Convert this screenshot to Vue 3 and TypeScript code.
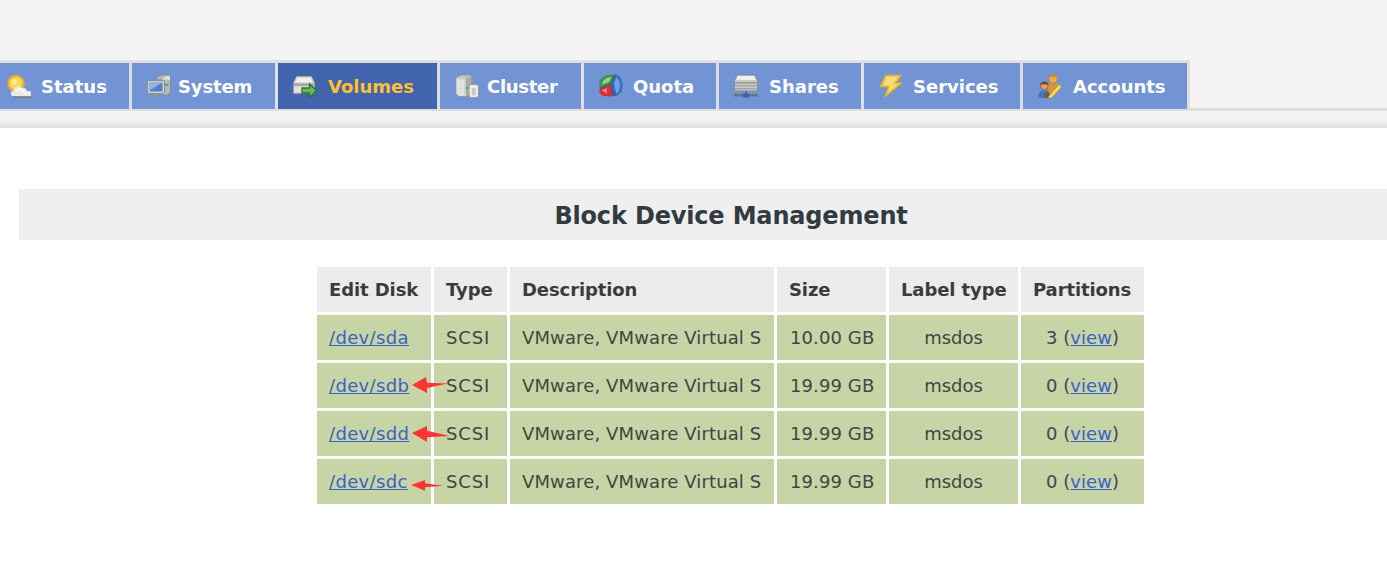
<script setup lang="ts">
interface Tab { name: string; icon: string; active?: boolean }
const tabs: Tab[] = [
  { name: 'Status', icon: 'status' },
  { name: 'System', icon: 'system' },
  { name: 'Volumes', icon: 'volumes', active: true },
  { name: 'Cluster', icon: 'cluster' },
  { name: 'Quota', icon: 'quota' },
  { name: 'Shares', icon: 'shares' },
  { name: 'Services', icon: 'services' },
  { name: 'Accounts', icon: 'accounts' },
]
const rows = [
  { dev: '/dev/sda', size: '10.00 GB', parts: 3 },
  { dev: '/dev/sdb', size: '19.99 GB', parts: 0 },
  { dev: '/dev/sdd', size: '19.99 GB', parts: 0 },
  { dev: '/dev/sdc', size: '19.99 GB', parts: 0 },
]
const arrows: Record<string, string> = {
  '/dev/sdb': '1,9 15,1 16,6.700 37,7.500 16,12 16,17',
  '/dev/sdd': '1,9 16,2 16,6.700 39,12 16,13.300 16,18',
  '/dev/sdc': '0,13 14,8 14,11.300 32,13.700 14,15.300 14,18.700',
}
</script>

<template>
  <div class="page">
    <nav class="topbar">
      <ul class="tabs">
        <li v-for="t in tabs" :key="t.name" class="tab" :class="['tab-' + t.icon, { active: t.active }]">
          <svg class="icon" viewBox="0 0 24 24" width="24" height="24">
            <template v-if="t.icon === 'status'">
              <circle cx="9" cy="9.500" r="8.300" fill="#efb637" stroke="#e8a52a" stroke-width="1.400" stroke-dasharray="1.600 1.200" />
              <circle cx="9" cy="9.500" r="6.300" fill="#f8d955" />
              <circle cx="7.500" cy="8" r="3" fill="#fbe88f" />
              <path d="M7 22.500a3 3 0 0 1 0-6 4.500 4.500 0 0 1 8-2.500 3.800 3.800 0 0 1 5 3.200 2.800 2.800 0 0 1 3 5.300z" fill="#e9ebe8" />
              <path d="M9 17.500a3 3 0 0 1 5-2l2 1.500 3 2" stroke="#fff" stroke-width="1.200" fill="none" />
              <path d="M6 23h18" stroke="#77776c" stroke-width="1.400" />
            </template>
            <template v-else-if="t.icon === 'system'">
              <path d="M10 3 14 1h9.500v17l-3 3H16V6h-6z" fill="#b4b8b8" stroke="#85888a" stroke-width="0.800" />
              <path d="M14.500 5.500 19.500 2h3.500v4z" fill="#dcdedd" />
              <rect x="18" y="10" width="3.500" height="1.600" fill="#4aa65a" />
              <rect x="0.500" y="6.500" width="17" height="13" rx="1" fill="#cfd1d0" stroke="#8b8e8f" />
              <rect x="2.500" y="8.500" width="13" height="9" fill="#4f83c0" />
              <path d="M2.500 8.500h13l-13 8z" fill="#8bb6e3" />
              <path d="M7 19.500h4v2h3v1.500H4v-1.500h3z" fill="#8f9394" />
            </template>
            <template v-else-if="t.icon === 'volumes'">
              <path d="M3.500 2.500h15l3 6v11H0.500V8.500z" fill="#c9c9c5" stroke="#a3a39f" stroke-width="0.800" />
              <path d="M4 3.500h14l2 5H2z" fill="#efefec" />
              <rect x="1" y="9.500" width="20" height="2.400" fill="#a6a6a2" />
              <rect x="1" y="12.500" width="20" height="6" fill="#e0e0dc" />
              <path d="M9 14h7.500V10l7 6.500-7 7V19H9z" fill="#73b55a" stroke="#24762b" stroke-width="1.300" />
            </template>
            <template v-else-if="t.icon === 'cluster'">
              <path d="M1 4 6 1h9l1.500 2v16L11 22.500H4L1 20z" fill="#c3c6c2" stroke="#94978f" stroke-width="0.800" />
              <path d="M1.500 4.500h9V22H4l-2.500-2z" fill="#e0e2de" />
              <path d="M4 4h6.500V22H9V6H4z" fill="#cfd2cd" />
              <path d="M11 3.500h5v15.500l-5 3z" fill="#a8aca6" />
              <circle cx="11.800" cy="14" r="1.100" fill="#4bab55" />
              <rect x="14" y="10.500" width="9.500" height="13" rx="2.200" fill="#e9ebe6" stroke="#989b95" />
              <rect x="17" y="14" width="3.600" height="7.500" rx="0.600" fill="#c7cac4" />
            </template>
            <template v-else-if="t.icon === 'quota'">
              <path d="M0.500 6 6 2 17 0.500l4.500 3L23.500 11l-1 6.500-5 4.500-13 0-3.500-3z" fill="#3d5f8f" />
              <path d="M0.500 14 1 6 6 2 15 0.500 12 9z" fill="#3a9a48" />
              <path d="M3 10.500 4 7 8 4l4.500-1L10 8z" fill="#9dd28f" />
              <path d="M17 0.500l4.500 3L23.500 11l-1 6.500-5 4.500-3.500-8-1-4z" fill="#3a6fc4" />
              <path d="M17.500 3.500l2.500 3 1 5-1 5-2.500 3-1.500-6-1-4z" fill="#6ea3e8" />
              <path d="M0.500 15.500 11.500 10.500 13 22.500 4 22 0.500 19z" fill="#df2b35" />
              <path d="M2.500 16.500 8 14v5.500z" fill="#f08588" />
            </template>
            <template v-else-if="t.icon === 'shares'">
              <path d="M3 1h18l2.500 5.500V17H0.500V6.500z" fill="#c6c8c6" stroke="#85888a" stroke-width="0.800" />
              <path d="M4 2h16l1.800 4H2.200z" fill="#f0f1ef" />
              <rect x="1" y="8" width="22" height="1.500" fill="#96999a" />
              <rect x="1" y="11" width="22" height="1.500" fill="#a2a6a6" />
              <rect x="1" y="14" width="22" height="1.500" fill="#a2a6a6" />
              <rect x="11" y="17" width="2" height="3" fill="#666" />
              <rect x="0" y="20" width="9" height="2.500" fill="#6e7374" />
              <rect x="15" y="20" width="9" height="2.500" fill="#6e7374" />
              <rect x="9" y="19.500" width="6" height="4" fill="#2b63cc" />
            </template>
            <template v-else-if="t.icon === 'services'">
              <path d="M6.500 1H23l-6 7.500h6.500L5 24l4-11H1z" fill="#efc545" stroke="#d2a02c" stroke-width="0.900" />
              <path d="M8 3h10.500l-5.500 7.500h5L9 18l2.500-7H4.500z" fill="#f7df7f" />
            </template>
            <template v-else>
              <circle cx="15" cy="5" r="4.200" fill="#eeaa55" stroke="#c27a2b" stroke-width="0.700" />
              <path d="M10.500 4C11 -0.500 19.500 -0.500 20 4c-2-1.500-7.500-1.500-9.500 0z" fill="#d68c1e" />
              <path d="M10.500 9.500h9l4 4-7 8-7-3z" fill="#dc9436" />
              <circle cx="6.300" cy="12" r="3.800" fill="#dca06a" stroke="#7f4f27" stroke-width="0.700" />
              <path d="M2 11c.5-4.500 8.500-4.500 8.500 0-2-1-6.500-1-8.500 0z" fill="#6e4524" />
              <path d="M0.500 24v-4L3.500 16.500h5.500L12 20v4z" fill="#3c78c0" />
              <path d="M6 20.500 10 17l3 7H7z" fill="#7c5a30" />
              <path d="M10 23 21 10.500l2.500 2.500L13 24.500z" fill="#f3dc6d" stroke="#b48c24" stroke-width="0.700" />
            </template>
          </svg>
          <span class="label">{{ t.name }}</span>
        </li>
      </ul>
    </nav>
    <div class="shade"></div>
    <main class="content">
      <h1 class="title">Block Device Management</h1>
      <table class="disks">
        <thead>
          <tr>
            <th class="c1">Edit Disk</th>
            <th class="c2">Type</th>
            <th class="c3">Description</th>
            <th class="c4">Size</th>
            <th class="c5">Label type</th>
            <th class="c6">Partitions</th>
          </tr>
        </thead>
        <tbody>
          <tr v-for="r in rows" :key="r.dev">
            <td class="dev">
              <a href="#">{{ r.dev }}</a>
              <svg v-if="arrows[r.dev]" class="arrow" viewBox="0 0 40 20" width="40" height="20">
                <polygon :points="arrows[r.dev]" fill="#fb3535" />
              </svg>
            </td>
            <td class="type">SCSI</td>
            <td class="desc">VMware, VMware Virtual S</td>
            <td class="size">{{ r.size }}</td>
            <td class="mid">msdos</td>
            <td class="mid parts">{{ r.parts }} (<a href="#">view</a>)</td>
          </tr>
        </tbody>
      </table>
    </main>
  </div>
</template>

<style scoped>
.page {
  width: 1387px;
  height: 586px;
  overflow: hidden;
  background: #fff;
  font-family: "DejaVu Sans", Verdana, sans-serif;
  color: #444;
}
.topbar {
  background: #f4f4f4;
  padding-top: 60px;
  height: 111px;
  box-sizing: border-box;
  position: relative;
}
.topbar::after {
  content: "";
  position: absolute;
  left: 0;
  right: 0;
  bottom: 0;
  height: 3px;
  background: #dedede;
}
.tabs {
  list-style: none;
  margin: 0;
  padding: 3px 3px 0 0;
  display: grid;
  grid-template-columns: 129px 143px 159px 141px 132px 142px 156px 164px;
  gap: 3px;
  width: 1190px;
  box-sizing: border-box;
  height: 51px;
  background: #dedede;
  position: relative;
  z-index: 1;
}
.tab {
  height: 46px;
  background: #7394d4;
  display: flex;
  align-items: center;
  padding-left: 15px;
  box-sizing: border-box;
  color: #fff;
  font-weight: 700;
  font-size: 18px;
}
.tab:first-child { padding-left: 7px; }
.tab.active { background: #4263ad; color: #fdc02f; }
.icon { flex: none; margin-right: 11px; }
.tab-status .icon { margin-right: 10px; }
.tab-system .icon { margin-right: 7px; }
.tab-system .label { letter-spacing: -0.15px; }
.tab-cluster .icon { margin-right: 8px; }
.tab-cluster .label { letter-spacing: -0.3px; }
.tab-quota .icon { margin-right: 10px; }
.tab-services .icon { margin-right: 10px; }
.shade {
  height: 17px;
  background: linear-gradient(#f4f4f4 0, #f4f4f4 50%, #e0e0e0 100%);
}
.content { padding: 61px 0 0 19px; }
.title {
  margin: 0;
  width: 1424px;
  height: 51px;
  line-height: 54px;
  background: #efefef;
  color: #333b40;
  text-align: center;
  font-size: 24px;
  font-weight: 700;
  letter-spacing: -0.17px;
}
.disks {
  margin: 24px 0 0 295px;
  border-collapse: separate;
  border-spacing: 3px;
  table-layout: fixed;
  width: 833px;
  font-size: 18px;
}
th, td {
  height: 45px;
  padding: 0 0 0 12px;
  text-align: left;
  box-sizing: border-box;
  white-space: nowrap;
  overflow: visible;
}
th { background: #ebebeb; color: #3b3b3b; font-weight: 700; letter-spacing: -0.1px; }
td { background: #c6d4a6; color: #444; }
td.dev { position: relative; z-index: 1; letter-spacing: 0.35px; }
td.type { letter-spacing: 0.85px; }
td.desc { letter-spacing: 0.12px; }
td.size { letter-spacing: 0.1px; padding-left: 13px; }
td.mid { text-align: center; padding: 0; }
td.parts { letter-spacing: 0.05px; }
.c1 { width: 114px; }
.c2 { width: 73px; }
.c3 { width: 264px; }
.c4 { width: 109px; }
.c5 { width: 129px; }
.c6 { width: 123px; }
a { color: #3b62c4; text-decoration: underline; }
.arrow { position: absolute; left: 94px; top: 13px; }
</style>
